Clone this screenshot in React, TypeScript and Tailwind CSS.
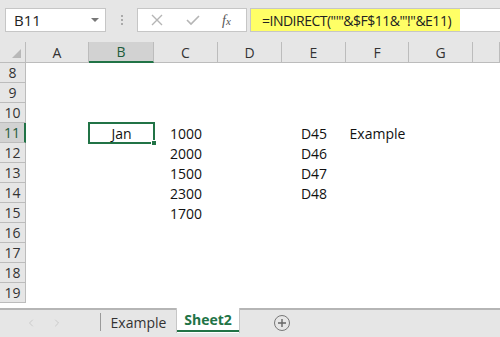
import { ChevronLeft, ChevronRight } from "lucide-react";

const cols = ["A", "B", "C", "D", "E", "F", "G", ""];
const rows = [8, 9, 10, 11, 12, 13, 14, 15, 16, 17, 18, 19];

// cell values keyed "row-col"
const cells: Record<string, string> = {
  "11-C": "1000",
  "12-C": "2000",
  "13-C": "1500",
  "14-C": "2300",
  "15-C": "1700",
  "11-E": "D45",
  "12-E": "D46",
  "13-E": "D47",
  "14-E": "D48",
  "11-F": "Example",
};

const gridCols = "grid-cols-[26px_63px_65px_64px_64px_64px_63px_64px_1fr]";

function FormulaBar() {
  return (
    <div className="h-[42px] bg-[#e6e6e6] flex items-start pt-2 pl-[5px]">
      <div className="w-[101px] h-[24px] bg-white border border-[#c6c6c6] flex items-center justify-between pl-2 pr-[6px] text-[15px] text-[#222]">
        <span>B11</span>
        <div className="w-0 h-0 border-l-[4px] border-r-[4px] border-t-[4px] border-l-transparent border-r-transparent border-t-[#777]" />
      </div>
      <div className="w-[31px] h-[24px] flex flex-col items-center justify-center gap-[2px]">
        <div className="w-[2px] h-[2px] bg-[#aaa]" />
        <div className="w-[2px] h-[2px] bg-[#aaa]" />
        <div className="w-[2px] h-[2px] bg-[#aaa]" />
      </div>
      <div className="w-[110px] h-[24px] bg-white border border-[#c6c6c6] flex items-center">
        <svg width="12" height="12" viewBox="0 0 12 12" className="ml-[13px]">
          <path d="M1 1L11 11M11 1L1 11" stroke="#b5b5b5" strokeWidth="1.4" />
        </svg>
        <svg width="14" height="12" viewBox="0 0 14 12" className="ml-[23px]">
          <path d="M1 6L5 10L13 2" stroke="#b5b5b5" strokeWidth="1.6" fill="none" />
        </svg>
        <span className="ml-[22px] text-[14px] italic text-[#555] font-['Liberation_Serif',serif]">
          f<span className="text-[11px]">x</span>
        </span>
      </div>
      <div className="flex-1 h-[24px] bg-white border border-[#c6c6c6] border-r-0 ml-[3px] flex items-center">
        <div className="h-full bg-[#ffff66] flex items-center pl-[11px] w-[209px] text-[14px] text-[#222] whitespace-nowrap tracking-[-0.5px]">
          =INDIRECT("'"&amp;$F$11&amp;"'!"&amp;E11)
        </div>
      </div>
    </div>
  );
}

function Grid() {
  return (
    <div className={`grid ${gridCols} bg-white`}>
      {/* header row */}
      <div className="h-[21px] bg-[#e6e6e6] border-b border-r border-[#bcbcbc] flex items-end justify-end pr-[4px] pb-[4px]">
        <svg width="9" height="9" viewBox="0 0 9 9">
          <path d="M9 0V9H0Z" fill="#b8b8b8" />
        </svg>
      </div>
      {cols.map((c, i) =>
        c === "B" ? (
          <div
            key={i}
            className="h-[21px] bg-[#d2d2d2] border-r border-[#bcbcbc] border-b-2 border-b-[#217346] flex items-center justify-center text-[14px] text-[#1e5c3a]"
          >
            {c}
          </div>
        ) : (
          <div
            key={i}
            className="h-[21px] bg-[#e6e6e6] border-r border-b border-[#bcbcbc] flex items-center justify-center text-[14px] text-[#333]"
          >
            {c}
          </div>
        ),
      )}
      {rows.map((r) => (
        <Row key={r} r={r} />
      ))}
    </div>
  );
}

function Row({ r }: { r: number }) {
  const sel = r === 11;
  return (
    <>
      <div
        className={
          sel
            ? "h-[20px] bg-[#d2d2d2] border-b border-[#bcbcbc] border-r-2 border-r-[#217346] flex items-center justify-center text-[14px] text-[#1e5c3a]"
            : "h-[20px] bg-[#e6e6e6] border-b border-r border-[#bcbcbc] flex items-center justify-center text-[14px] text-[#333]"
        }
      >
        {r}
      </div>
      {cols.map((c, i) => {
        if (sel && c === "B") {
          return (
            <div key={i} className="h-[20px] relative">
              <div className="absolute -top-[1px] -left-[1px] -right-[1px] -bottom-[1px] border-2 border-[#217346] flex items-center justify-center text-[14px] text-[#111] bg-white">
                Jan
              </div>
              <div className="absolute -right-[3px] -bottom-[3px] w-[6px] h-[6px] bg-[#217346] border border-white" />
            </div>
          );
        }
        return (
          <div key={i} className="h-[20px] flex items-center justify-center text-[14px] text-[#111]">
            {cells[`${r}-${c}`] ?? ""}
          </div>
        );
      })}
    </>
  );
}

function TabBar() {
  return (
    <div className="h-[29px] mt-[5px] bg-[#e6e6e6] border-t-2 border-[#b5b5b5] flex items-start">
      <div className="w-[100px] h-[25px] flex items-center pl-[25px] gap-[14px] text-[#c0c0c0]">
        <ChevronLeft size={12} strokeWidth={1.5} />
        <ChevronRight size={12} strokeWidth={1.5} />
      </div>
      <div className="w-px h-[18px] bg-[#9a9a9a] mt-[3px]" />
      <div className="w-[75px] h-[25px] flex items-center justify-center text-[14px] text-[#333]">
        Example
      </div>
      <div className="w-[64px] h-[25px] -mt-[2px] bg-white border-x border-[#c6c6c6] flex flex-col items-center justify-end">
        <span className="text-[14px] font-bold text-[#217346] leading-[20px]">Sheet2</span>
        <div className="w-full h-[2px] bg-[#217346] mb-[1px]" />
      </div>
      <div className="ml-[34px] mt-[5px] w-[16px] h-[16px] rounded-full border border-[#777] flex items-center justify-center">
        <svg width="8" height="8" viewBox="0 0 8 8">
          <path d="M4 0V8M0 4H8" stroke="#666" strokeWidth="1.4" />
        </svg>
      </div>
    </div>
  );
}

export default function App() {
  return (
    <div className="w-[500px] h-[337px] overflow-hidden bg-white font-['Open_Sans','Liberation_Sans',sans-serif]">
      <FormulaBar />
      <Grid />
      <TabBar />
    </div>
  );
}
